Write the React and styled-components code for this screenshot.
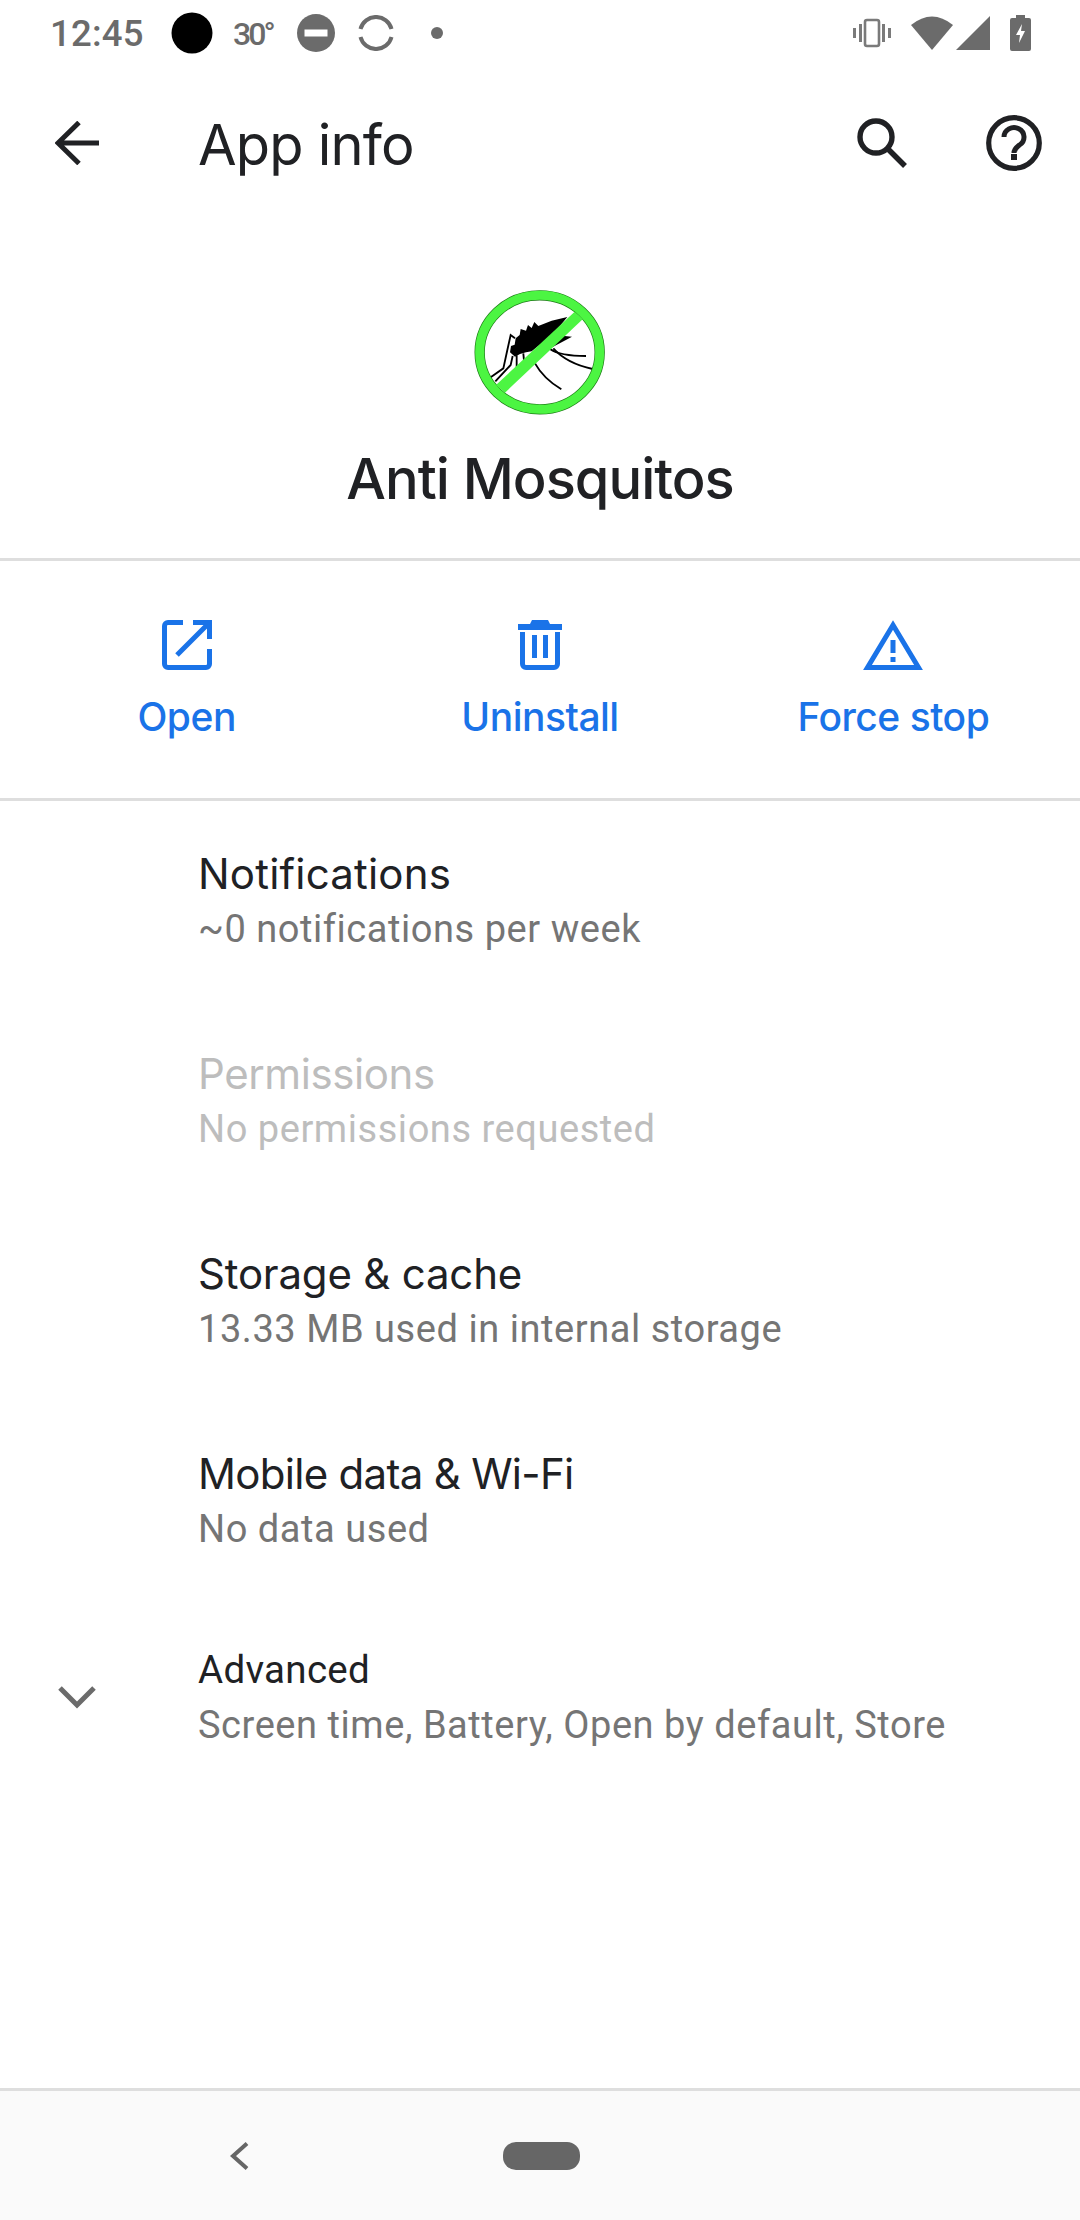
import React from "react";
import styled, { createGlobalStyle } from "styled-components";

const Global = createGlobalStyle`
  html, body { margin: 0; padding: 0; background: #fff; }
  #root { width: 1080px; height: 2220px; }
`;

const Screen = styled.div`
  width: 1080px;
  height: 2220px;
  display: flex;
  flex-direction: column;
  background: #fff;
  overflow: hidden;
  font-family: Roboto, "Liberation Sans", sans-serif;
`;

const StatusBar = styled.div`
  height: 68px;
  flex: none;
  display: flex;
  align-items: center;
  padding: 0 49px 0 50px;
  color: #6b6b6b;
`;
const Time = styled.span`
  font-size: 36.5px;
  font-weight: 500;
  width: 121px;
  letter-spacing: 0.2px;
  line-height: 68px;
`;
const Temp = styled.span`
  font-size: 32px;
  font-weight: 500;
  width: 46px;
  margin-left: 20px;
  letter-spacing: -3px;
  line-height: 68px;
`;
const StatusIcon = styled.svg`
  flex: none;
  display: block;
  margin-left: ${(p) => p.$gap || 0}px;
  margin-bottom: 3px;
`;
const Spacer = styled.div`
  flex: 1;
`;

const AppBar = styled.div`
  height: 150px;
  flex: none;
  display: flex;
  align-items: center;
  padding: 0 38px 0 55px;
`;
const BarTitle = styled.h1`
  margin: 4px 0 0 99px;
  font: 400 56px/60px Inter, sans-serif;
  letter-spacing: -0.8px;
  color: #202124;
  flex: 1;
`;
const BarIcon = styled.svg`
  flex: none;
  display: block;
  margin-left: ${(p) => p.$gap || 0}px;
`;

const Header = styled.div`
  height: 343px;
  flex: none;
  display: flex;
  flex-direction: column;
  align-items: center;
  padding-top: 52px;
  box-sizing: border-box;
  border-bottom: 3px solid #dedede;
`;
const AppName = styled.div`
  margin-top: 19px;
  font: 500 56px/60px Inter, sans-serif;
  letter-spacing: -1px;
  color: #202124;
`;

const Actions = styled.div`
  height: 240px;
  flex: none;
  box-sizing: border-box;
  padding: 59px 10px 0;
  display: grid;
  grid-template-columns: repeat(3, 1fr);
  border-bottom: 3px solid #dedede;
`;
const Action = styled.div`
  display: flex;
  flex-direction: column;
  align-items: center;
  color: #1a73e8;
`;
const ActionLabel = styled.span`
  margin-top: 22px;
  font: 500 39px/50px Inter, sans-serif;
  letter-spacing: -0.5px;
`;

const List = styled.div`
  flex: 1;
  display: flex;
  flex-direction: column;
`;
const Row = styled.div`
  height: ${(p) => p.$h || 200}px;
  flex: none;
  box-sizing: border-box;
  display: flex;
  flex-direction: column;
  justify-content: center;
  padding-left: 198px;
  position: relative;
`;
const RowTitle = styled.div`
  font: 400 ${(p) => p.$size || 42}px/55px ${(p) => p.$font || "Inter"}, sans-serif;
  letter-spacing: ${(p) => p.$ls ?? -0.6}px;
  color: ${(p) => (p.$off ? "#bdbdbd" : "#202124")};
`;
const RowSub = styled.div`
  font-size: 38px;
  line-height: 55px;
  letter-spacing: 0.55px;
  margin-top: 1px;
  color: ${(p) => (p.$off ? "#bdbdbd" : "#757575")};
`;
const Chevron = styled.svg`
  position: absolute;
  left: 58px;
  top: 84px;
`;

const NavBar = styled.div`
  height: 132px;
  flex: none;
  box-sizing: border-box;
  background: #fafafa;
  border-top: 3px solid #dedede;
  display: flex;
  align-items: center;
  padding: 0 0 0 230px;
`;
const Pill = styled.div`
  width: 77px;
  height: 28px;
  border-radius: 13px;
  background: #666;
  margin-left: 254px;
`;

const Mosquito = () => (
  <svg width="240" height="160" viewBox="0 0 720 480">
    <g fill="none" stroke="#000" strokeWidth="5.5">
      <path d="M285 205 L272 195 L262 240 L250 295 L212 322" />
      <path d="M278 258 L272 285 L226 334" />
      <path d="M290 256 L290 292" />
      <path d="M310 250 L312 272" />
      <path d="M345 280 Q370 325 424 358" />
      <path d="M390 237 Q420 258 498 258" />
      <path d="M400 235 Q440 280 518 297" />
    </g>
    <path
      d="M442 141 L395 152 L355 168 L343 156 L335 174 L324 165 L318 182 L302 177 L299 195 L287 205 L284 224 L273 228 L270 247 L285 260 L300 252 L318 247 L335 244 L400 192 Z"
      fill="#000"
    />
    <path d="M412 196 L456 200 L425 217 L392 234 Z" fill="#000" />
    <ellipse cx="359" cy="247" rx="180" ry="171" fill="none" stroke="#1c7a16" strokeWidth="31" />
    <ellipse cx="359" cy="247" rx="180" ry="171" fill="none" stroke="#4cf542" strokeWidth="27" />
    <path d="M228 345 L464 125 L488 148 L255 368 Z" fill="#4cf542" />
  </svg>
);

export default function App() {
  return (
    <Screen>
      <Global />
      <StatusBar>
        <Time>12:45</Time>
        <StatusIcon width="42" height="42" viewBox="0 0 42 42">
          <circle cx="21" cy="21" r="20.5" fill="#000" />
        </StatusIcon>
        <Temp>30°</Temp>
        <StatusIcon width="38" height="38" viewBox="0 0 38 38" $gap={18}>
          <circle cx="19" cy="19" r="19" fill="#6b6b6b" />
          <rect x="7.5" y="15.5" width="23" height="7" fill="#fff" />
        </StatusIcon>
        <StatusIcon width="36" height="36" viewBox="0 0 36 36" $gap={23}>
          <path d="M2.5 14 A16 16 0 0 1 33.5 14 M33.5 22 A16 16 0 0 1 2.5 22" fill="none" stroke="#6b6b6b" strokeWidth="4" />
        </StatusIcon>
        <StatusIcon width="12" height="12" viewBox="0 0 12 12" $gap={37}>
          <circle cx="6" cy="6" r="6" fill="#6b6b6b" />
        </StatusIcon>
        <Spacer />
        <StatusIcon width="40" height="30" viewBox="0 0 40 30">
          <path d="M1 10 h3 v10 h-3z M7 6 h3 v18 h-3z M30 6 h3 v18 h-3z M36 10 h3 v10 h-3z" fill="#7a7a7a" />
          <rect x="13" y="2" width="14" height="26" rx="2" fill="none" stroke="#7a7a7a" strokeWidth="2.6" />
        </StatusIcon>
        <StatusIcon width="42" height="36" viewBox="0 0 42 36" $gap={19}>
          <path d="M0 10 Q21 -7 42 10 L21 35 Z" fill="#6b6b6b" />
        </StatusIcon>
        <StatusIcon width="34" height="34" viewBox="0 0 34 34" $gap={3}>
          <path d="M34 0 V34 H0 Z" fill="#6b6b6b" />
        </StatusIcon>
        <StatusIcon width="21" height="36" viewBox="0 0 21 36" $gap={20}>
          <path d="M6 0 h9 v3 h4 a2 2 0 0 1 2 2 v29 a2 2 0 0 1 -2 2 h-17 a2 2 0 0 1 -2 -2 v-29 a2 2 0 0 1 2 -2 h4z" fill="#6b6b6b" />
          <path d="M12 9 L6 20 H10 L9 28 L15 16 H11 Z" fill="#fff" />
        </StatusIcon>
      </StatusBar>

      <AppBar>
        <BarIcon width="44" height="44" viewBox="0 0 44 44">
          <path d="M44 22 H3 M24 1.5 L3 22 L24 42.5" fill="none" stroke="#202124" strokeWidth="5" />
        </BarIcon>
        <BarTitle>App info</BarTitle>
        <BarIcon width="50" height="50" viewBox="0 0 50 50">
          <circle cx="19" cy="19" r="16" fill="none" stroke="#202124" strokeWidth="5.4" />
          <path d="M30 30 L48 48" stroke="#202124" strokeWidth="5.4" />
        </BarIcon>
        <BarIcon width="56" height="56" viewBox="0 0 56 56" $gap={79}>
          <circle cx="28" cy="28" r="25.3" fill="none" stroke="#202124" strokeWidth="5.2" />
          <path d="M18 22 a10 9.5 0 1 1 15.5 8 c-3 2.4 -5.5 3.8 -5.5 8" fill="none" stroke="#202124" strokeWidth="5" />
          <rect x="25" y="39" width="6" height="6" fill="#202124" />
        </BarIcon>
      </AppBar>

      <Header>
        <Mosquito />
        <AppName>Anti Mosquitos</AppName>
      </Header>

      <Actions>
        <Action>
          <svg width="50" height="50" viewBox="0 0 50 50">
            <path d="M21 2.5 H6 a3.5 3.5 0 0 0 -3.5 3.5 V44 a3.5 3.5 0 0 0 3.5 3.5 H44 a3.5 3.5 0 0 0 3.5 -3.5 V29" fill="none" stroke="#1a73e8" strokeWidth="5" />
            <path d="M31 2.5 H47.5 V19 M47.5 2.5 L15 35" fill="none" stroke="#1a73e8" strokeWidth="5" />
          </svg>
          <ActionLabel>Open</ActionLabel>
        </Action>
        <Action>
          <svg width="46" height="50" viewBox="0 0 46 50">
            <path d="M15 0 H31 L33 4 H45 V10 H1 V4 H13 Z" fill="#1a73e8" />
            <path d="M5.5 12 V44 a3.5 3.5 0 0 0 3.5 3.5 H37 a3.5 3.5 0 0 0 3.5 -3.5 V12" fill="none" stroke="#1a73e8" strokeWidth="5" />
            <path d="M17.5 15 V38 M28.5 15 V38" stroke="#1a73e8" strokeWidth="5" />
          </svg>
          <ActionLabel>Uninstall</ActionLabel>
        </Action>
        <Action>
          <svg width="60" height="50" viewBox="0 0 60 50">
            <path d="M30 5 L55.5 47.5 H4.5 Z" fill="none" stroke="#1a73e8" strokeWidth="5" />
            <path d="M27.5 20 H32.5 V33 H27.5 Z M27.5 37 H32.5 V42 H27.5 Z" fill="#1a73e8" />
          </svg>
          <ActionLabel>Force stop</ActionLabel>
        </Action>
      </Actions>

      <List>
        <Row>
          <RowTitle $ls={0.2}>Notifications</RowTitle>
          <RowSub>~0 notifications per week</RowSub>
        </Row>
        <Row>
          <RowTitle $off $ls={-0.4}>Permissions</RowTitle>
          <RowSub $off>No permissions requested</RowSub>
        </Row>
        <Row>
          <RowTitle $ls={-0.2}>Storage &amp; cache</RowTitle>
          <RowSub>13.33 MB used in internal storage</RowSub>
        </Row>
        <Row>
          <RowTitle $ls={-0.7}>Mobile data &amp; Wi-Fi</RowTitle>
          <RowSub>No data used</RowSub>
        </Row>
        <Row $h={192}>
          <Chevron width="38" height="24" viewBox="0 0 38 24">
            <path d="M2 3 L19 20 L36 3" fill="none" stroke="#6b6b6b" strokeWidth="5" />
          </Chevron>
          <RowTitle $size={38.5} $font="Roboto" $ls={0.3}>Advanced</RowTitle>
          <RowSub>Screen time, Battery, Open by default, Store</RowSub>
        </Row>
      </List>

      <NavBar>
        <svg width="19" height="28" viewBox="0 0 19 28">
          <path d="M17 1.5 L3 14 L17 26.5" fill="none" stroke="#666" strokeWidth="4" />
        </svg>
        <Pill />
      </NavBar>
    </Screen>
  );
}
